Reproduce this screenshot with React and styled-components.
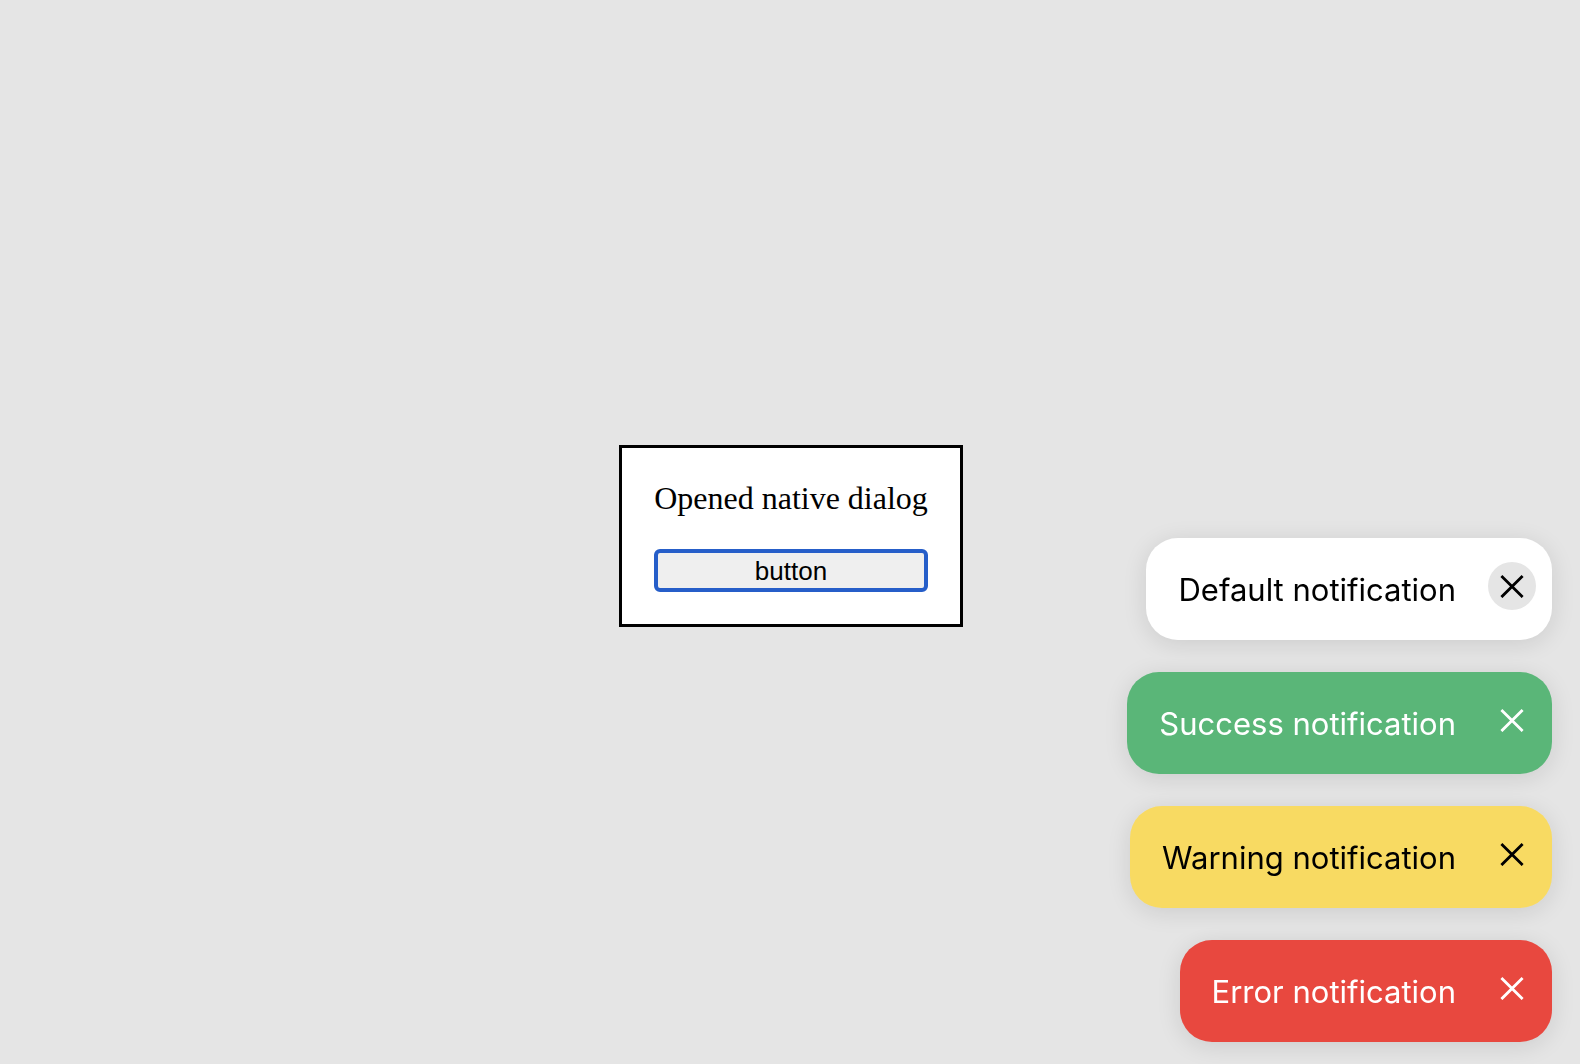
import React, { useState } from 'react';
import styled, { createGlobalStyle, css } from 'styled-components';

const GlobalStyle = createGlobalStyle`
  *, *::before, *::after { box-sizing: border-box; }
  body {
    margin: 0;
    background: #e5e5e5;
    color: #000;
  }
`;

const Page = styled.main`
  display: grid;
  place-items: center;
  min-height: 100vh;
  padding: 8px 0 0 2px;
`;

const Dialog = styled.dialog`
  position: static;
  margin: 0;
  padding: 32px;
  border: 3px solid #000;
  background: #fff;
  color: #000;
  font-family: 'Liberation Serif', 'Times New Roman', serif;
  font-size: 32px;
  line-height: 37px;

  &[open] {
    display: flex;
    flex-direction: column;
    gap: 32px;
  }
`;

const DialogText = styled.p`
  margin: 0;
`;

const DialogButton = styled.button`
  height: 43px;
  padding: 0 12px;
  border: 4px solid #265ec9;
  border-radius: 6px;
  outline: none;
  background: #efefef;
  color: #000;
  font-family: 'Liberation Sans', Arial, sans-serif;
  font-size: 26px;
  line-height: 32px;
`;

const Notifications = styled.ul`
  position: fixed;
  right: 28px;
  bottom: 22px;
  display: flex;
  flex-direction: column;
  align-items: flex-end;
  gap: 32px;
  margin: 0;
  padding: 0;
  list-style: none;
`;

const tones = {
  default: css`background: #fff; color: #000;`,
  success: css`background: #5ab678; color: #fff;`,
  warning: css`background: #f8da62; color: #000;`,
  error: css`background: #e8483f; color: #fff;`,
};

const Notification = styled.li`
  display: flex;
  align-items: flex-start;
  border-radius: 32px;
  box-shadow: 0 4px 24px rgba(0, 0, 0, 0.11);
  ${({ $tone }) => tones[$tone]}
`;

const Message = styled.p`
  margin: 0;
  padding: 32px 32px 30px;
  font-family: Inter, 'Liberation Sans', sans-serif;
  font-size: 31px;
  line-height: 40px;
  white-space: nowrap;
`;

const CloseButton = styled.button`
  display: grid;
  place-items: center;
  width: 48px;
  height: 48px;
  margin: 24px 16px 0 0;
  padding: 0;
  border: 0;
  border-radius: 50%;
  outline: none;
  background: ${({ $active }) => ($active ? '#e5e5e5' : 'transparent')};
  color: inherit;
  cursor: pointer;
`;

function CloseIcon() {
  return (
    <svg width="24" height="24" viewBox="0 0 24 24" fill="none" stroke="currentColor" strokeWidth="2.8" strokeLinecap="square" aria-hidden="true">
      <path d="M2.4 2.9 21.6 22.1M21.6 2.9 2.4 22.1" />
    </svg>
  );
}

const initialItems = [
  { tone: 'default', text: 'Default notification' },
  { tone: 'success', text: 'Success notification' },
  { tone: 'warning', text: 'Warning notification' },
  { tone: 'error', text: 'Error notification' },
];

export default function App() {
  const [items, setItems] = useState(initialItems);
  const [open, setOpen] = useState(true);
  const dismiss = (tone) => setItems((list) => list.filter((item) => item.tone !== tone));

  return (
    <>
      <GlobalStyle />
      <Page>
        <Dialog open={open}>
          <DialogText>Opened native dialog</DialogText>
          <DialogButton type="button" onClick={() => setOpen(false)}>button</DialogButton>
        </Dialog>
      </Page>
      <Notifications>
        {items.map(({ tone, text }) => (
          <Notification key={tone} $tone={tone}>
            <Message>{text}</Message>
            <CloseButton type="button" aria-label="Close" $active={tone === 'default'} onClick={() => dismiss(tone)}>
              <CloseIcon />
            </CloseButton>
          </Notification>
        ))}
      </Notifications>
    </>
  );
}
